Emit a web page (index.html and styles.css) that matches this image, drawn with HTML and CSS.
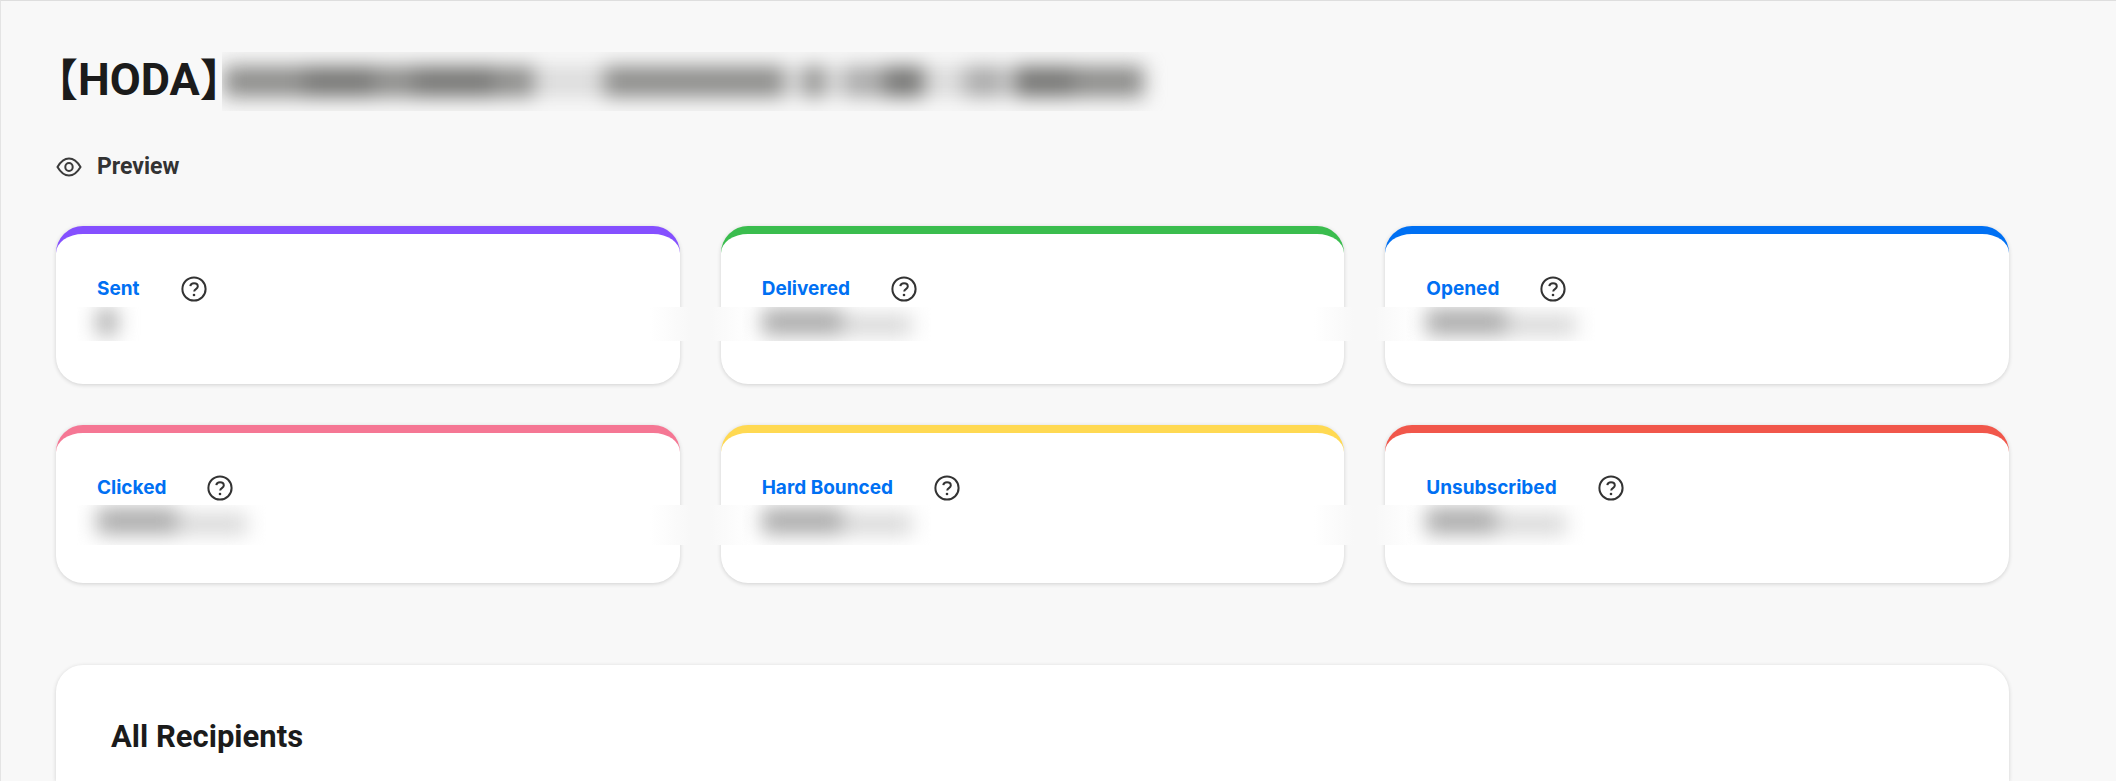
FILE: index.html
```
<!DOCTYPE html>
<html lang="en">
<head>
    <meta charset="UTF-8">
    <meta name="viewport" content="width=device-width, initial-scale=1.0">
    <title>Campaign Report</title>
    <link rel="stylesheet" href="styles.css">
</head>
<body>
    <svg class="sprite" aria-hidden="true">
        <symbol id="help" viewBox="0 0 26 26">
            <circle cx="13" cy="13" r="11.6"/>
            <path d="M9.300 10.200C9.600 8.300 11 7.300 13 7.300c2.200 0 3.800 1.300 3.800 3.200 0 2.600-3.600 2.700-3.600 5"/>
            <circle class="dot" cx="13" cy="19" r="1.300"/>
        </symbol>
    </svg>

    <main class="report">
        <h1 class="title">
            <span class="bracket">【</span>HODA<span class="bracket">】</span>
            <span class="mask mask_title">
                <span class="blur"><i class="w80"></i><i class="w70 dark"></i><i class="w40"></i><i class="w80 dark"></i><i class="w40"></i><i class="w70 none"></i><i class="w180"></i><i class="w20 none"></i><i class="w20"></i><i class="w20 none"></i><i class="w40 light"></i><i class="w40 dark"></i><i class="w40 none"></i><i class="w40 light"></i><i class="w10 none"></i><i class="w60 dark"></i><i class="w70"></i></span>
            </span>
        </h1>

        <button class="preview" type="button">
            <svg viewBox="0 0 26 22" aria-hidden="true">
                <path d="M1.500 11C5 5 8 2.500 13 2.500S21 5 24.500 11C21 17 18 19.500 13 19.500S5 17 1.500 11z"/>
                <ellipse cx="13" cy="11" rx="3.700" ry="4"/>
            </svg>
            Preview
        </button>

        <section class="cards">
            <div class="card sent">
                <div class="label"><a href="#">Sent</a><button class="help" type="button" aria-label="About sent"><svg><use href="#help"/></svg></button></div>
                <div class="mask mask_value"><span class="blur"><i class="w20 dark"></i></span></div>
            </div>
            <div class="card delivered">
                <div class="label"><a href="#">Delivered</a><button class="help" type="button" aria-label="About delivered"><svg><use href="#help"/></svg></button></div>
                <div class="mask mask_value"><span class="blur"><i class="w80 dark"></i><i class="w70 small"></i></span></div>
            </div>
            <div class="card opened">
                <div class="label"><a href="#">Opened</a><button class="help" type="button" aria-label="About opened"><svg><use href="#help"/></svg></button></div>
                <div class="mask mask_value"><span class="blur"><i class="w80 dark"></i><i class="w70 small"></i></span></div>
            </div>
            <div class="card clicked">
                <div class="label"><a href="#">Clicked</a><button class="help" type="button" aria-label="About clicked"><svg><use href="#help"/></svg></button></div>
                <div class="mask mask_value"><span class="blur"><i class="w80 dark"></i><i class="w70 small"></i></span></div>
            </div>
            <div class="card bounced">
                <div class="label"><a href="#">Hard Bounced</a><button class="help" type="button" aria-label="About hard bounced"><svg><use href="#help"/></svg></button></div>
                <div class="mask mask_value"><span class="blur"><i class="w80 dark"></i><i class="w70 small"></i></span></div>
            </div>
            <div class="card unsubscribed">
                <div class="label"><a href="#">Unsubscribed</a><button class="help" type="button" aria-label="About unsubscribed"><svg><use href="#help"/></svg></button></div>
                <div class="mask mask_value"><span class="blur"><i class="w70 dark"></i><i class="w70 small"></i></span></div>
            </div>
        </section>

        <section class="recipients">
            <h2>All Recipients</h2>
        </section>
    </main>
</body>
</html>
```
FILE: styles.css
```
*{ margin: 0; padding: 0; box-sizing: border-box;}
a{ text-decoration: none;}
button{ border: none; background: none; font: inherit; cursor: pointer;}
html{ height: 100%;}
body{ min-height: 100%; background-color: #f8f8f8; color: #1b1b1b; font-family: Roboto, "Noto Sans CJK SC", sans-serif; font-weight: 700;}

.sprite{ display: none;}
.report{ min-height: 100vh; padding: 51px 107px 0 55px; border-top: 1px solid #dedede; border-left: 1px solid #e4e4e4;}

.title{ display: flex; height: 60px; font-size: 45px; line-height: 56px;}
.bracket{ font-family: "Noto Sans CJK SC", sans-serif; font-size: 44px; line-height: 50px; font-feature-settings: "halt";}

/* blurred out content */
.mask{ display: flex; overflow: hidden;}
.blur{ display: flex; filter: blur(10px);}
.blur i{ flex: none; background-color: #8c8c8a;}
.blur .dark{ background-color: #757573;}
.blur .light{ background-color: #aaa;}
.blur .none{ background-color: #dcdcdc;}
.mask_title{ width: 950px; height: 59px; padding: 14px 0 14px 2px;}
.mask_value{ height: 34px; margin: 3px 0 0 -20px; padding: 2px 0 6px 20px;}
.mask_value .dark{ background-color: #aaa;}
.mask_value .small{ margin-top: 6px; background-color: #d6d6d6;}
.w10{ width: 10px;}
.w20{ width: 20px;}
.w40{ width: 40px;}
.w60{ width: 60px;}
.w70{ width: 70px;}
.w80{ width: 80px;}
.w180{ width: 180px;}

.preview{ display: flex; align-items: center; gap: 15px; height: 28px; margin-top: 41px; color: #333; font-size: 23px; line-height: 28px;}
.preview svg{ width: 26px; height: 22px; fill: none; stroke: #3b3b3b; stroke-width: 2;}

.cards{ display: grid; grid-template-columns: repeat(3, 1fr); gap: 41px; margin-top: 45px;}
.card{ position: relative; height: 158px; padding: 40px 41px 0; border-top: 8px solid; border-radius: 27px; background-color: #fff; box-shadow: 0 1px 4px rgba(0,0,0,.16);}
.sent{ border-color: #8550ff;}
.delivered{ border-color: #3abd4e;}
.opened{ border-color: #0070f3;}
.clicked{ border-color: #f57794;}
.bounced{ border-color: #ffd952;}
.unsubscribed{ border-color: #f1574b;}

/* blur edges running over the gaps between cards */
.card::before,
.card::after{ position: absolute; top: 73px; width: 40px; height: 34px;}
.card:not(:nth-child(3n+1))::before{ content: ""; left: -10px; background: linear-gradient(to right, #f8f8f8, #fff);}
.card:not(:nth-child(3n))::after{ content: ""; right: -10px; background: linear-gradient(to left, #f8f8f8, #fff);}

/* second row has a taller blur */
.card:nth-child(n+4) .mask_value{ height: 40px; margin-top: 2px; padding: 3px 0 11px 20px;}
.card:nth-child(n+4)::before,
.card:nth-child(n+4)::after{ top: 72px; height: 40px;}

.label{ display: flex; align-items: center; gap: 41px; height: 30px; font-family: Inter, sans-serif; font-size: 19px; line-height: 30px;}
.label a{ color: #0070f3;}
.help{ width: 26px; height: 26px;}
.help svg{ display: block; width: 26px; height: 26px; fill: none; stroke: #333; stroke-width: 2;}
.dot{ fill: #333; stroke: none;}

.recipients{ margin-top: 82px; padding: 52px 55px 0; border-radius: 27px 27px 0 0; background-color: #fff; box-shadow: 0 1px 4px rgba(0,0,0,.16);}
.recipients h2{ height: 64px; font-size: 31px; line-height: 40px;}
```
